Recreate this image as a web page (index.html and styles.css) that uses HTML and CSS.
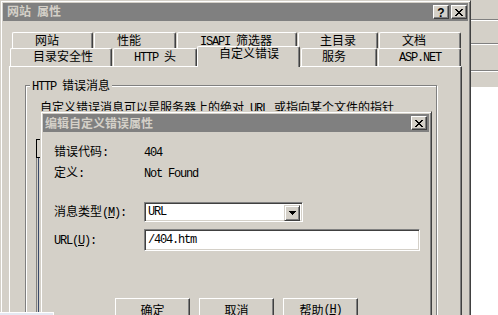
FILE: index.html
```html
<!DOCTYPE html>
<html>
<head>
<meta charset="utf-8">
<link rel="stylesheet" href="styles.css">
</head>
<body>
<div class="desk">
  <div class="bgwin">
    <div class="bg-sp s1"></div>
    <div class="bg-rule"></div>
    <div class="bg-sp s2"></div>
    <div class="bg-rule"></div>
    <div class="bg-sp s3"></div>
    <div class="bg-rule"></div>
    <div class="bg-sp s4"></div>
    <div class="bg-white"></div>
  </div>

  <div class="win">
    <div class="cap">
      <span class="cap-title">网站<span class="l"> </span>属性</span>
      <div class="cap-btns">
        <span class="cbtn help">?</span>
        <span class="cbtn"><svg width="8" height="7" viewBox="0 0 8 7"><path d="M0 0h2v1h-2zM6 0h2v1h-2zM1 1h2v1h-2zM5 1h2v1h-2zM2 2h4v1h-4zM3 3h2v1h-2zM2 4h4v1h-4zM1 5h2v1h-2zM5 5h2v1h-2zM0 6h2v1h-2zM6 6h2v1h-2z" fill="#000"/></svg></span>
      </div>
    </div>
    <div class="body">
      <div class="tabs">
        <div class="tabrow r1">
          <div class="tab t-wz">网站</div>
          <div class="tab t-xn">性能</div>
          <div class="tab t-isapi"><span class="l">ISAPI </span>筛选器</div>
          <div class="tab t-zml">主目录</div>
          <div class="tab t-wd">文档</div>
        </div>
        <div class="tabrow r2">
          <div class="tab t-ml">目录安全性</div>
          <div class="tab t-http"><span class="l">HTTP </span>头</div>
          <div class="tab t-sel">自定义错误</div>
          <div class="tab t-fw">服务</div>
          <div class="tab t-asp"><span class="l">ASP.NET</span></div>
        </div>
      </div>
      <div class="pane">
        <div class="group">
          <div class="legend"><span class="l">HTTP </span>错误消息</div>
          <div class="desc">自定义错误消息可以是服务器上的绝对<span class="l"> URL </span>或指向某个文件的指针</div>
          <div class="list">
            <div class="list-sel"></div>
            <div class="list-rest"></div>
          </div>
        </div>
      </div>
    </div>
  </div>

  <div class="dlg">
    <div class="cap dcap">
      <span class="cap-title">编辑自定义错误属性</span>
      <div class="cap-btns dbtns">
        <span class="cbtn"><svg width="8" height="7" viewBox="0 0 8 7"><path d="M0 0h2v1h-2zM6 0h2v1h-2zM1 1h2v1h-2zM5 1h2v1h-2zM2 2h4v1h-4zM3 3h2v1h-2zM2 4h4v1h-4zM1 5h2v1h-2zM5 5h2v1h-2zM0 6h2v1h-2zM6 6h2v1h-2z" fill="#000"/></svg></span>
      </div>
    </div>
    <div class="dbody">
      <div class="drow row1">
        <div class="dlab">错误代码<span class="l">:</span></div>
        <div class="dval"><span class="l">404</span></div>
      </div>
      <div class="drow row2">
        <div class="dlab">定义<span class="l">:</span></div>
        <div class="dval"><span class="l">Not Found</span></div>
      </div>
      <div class="drow row3">
        <div class="dlab">消息类型<span class="l">(<u>M</u>):</span></div>
        <div class="combo">
          <div class="combo-text"><span class="l">URL</span></div>
          <div class="dd"><svg width="7" height="4" viewBox="0 0 7 4"><path d="M0 0h7v1h-1v1h-1v1h-1v1h-1v-1h-1v-1h-1v-1h-1z" fill="#000"/></svg></div>
        </div>
      </div>
      <div class="drow row4">
        <div class="dlab"><span class="l">URL(<u>U</u>):</span></div>
        <div class="edit"><span class="l">/404.htm</span></div>
      </div>
      <div class="btns">
        <div class="btn">确定</div>
        <div class="btn">取消</div>
        <div class="btn">帮助<span class="l">(<u>H</u>)</span></div>
      </div>
    </div>
  </div>

  <div class="taskitem"></div>
</div>
</body>
</html>
```

FILE: styles.css
```css
* { box-sizing: border-box; }
html, body { margin: 0; padding: 0; }
body {
  width: 498px;
  height: 315px;
  overflow: hidden;
  background: #d4d0c8;
  color: #000;
  font-family: "Noto Sans CJK SC", sans-serif;
  font-size: 12px;
  line-height: 12px;
}
.desk { position: relative; width: 498px; height: 315px; overflow: hidden; }
.l { font-family: "Liberation Mono", "Noto Sans CJK SC", monospace; letter-spacing: -1.2px; }

/* background window on the right */
.bgwin {
  position: absolute; left: 471px; top: 0; width: 27px; height: 315px;
  display: flex; flex-direction: column; background: #d4d0c8;
}
.bg-sp.s1 { height: 19px; }
.bg-sp.s2 { height: 22px; }
.bg-sp.s3 { height: 25px; }
.bg-sp.s4 { height: 15px; }
.bg-rule { height: 2px; border-top: 1px solid #808080; border-bottom: 1px solid #fff; }
.bg-white { flex: 1; background: #fff; }

/* outer property window */
.win {
  position: absolute; left: 0; top: 0; width: 471px; height: 345px;
  border: 1px solid; border-color: #d4d0c8 #404040 #404040 #d4d0c8;
  box-shadow: inset 1px 1px #fff, inset -1px -1px #808080;
  padding: 2px; background: #d4d0c8;
}
.cap {
  height: 18px; background: #808080; color: #d4d0c8; font-weight: bold;
  display: flex; align-items: center; justify-content: space-between;
  padding-left: 4px;
}
.cap-title { white-space: nowrap; }
.cap-btns { display: flex; gap: 2px; margin-right: 1px; }
.cbtn {
  width: 16px; height: 14px; display: flex; align-items: center; justify-content: center;
  border: 1px solid; border-color: #fff #404040 #404040 #fff;
  box-shadow: inset -1px -1px #808080; background: #d4d0c8;
}
.cbtn.help { font: bold 12px/12px "Liberation Sans", sans-serif; color: #000; padding-top: 1px; }
.body { padding-top: 11px; }

/* tabs */
.tabs { display: flex; flex-direction: column; }
.tabrow { display: flex; align-items: flex-start; }
.r1 { margin-left: 9px; height: 16px; }
.r2 { margin-left: 7px; height: 18px; }
.tab {
  height: 100%; margin-left: 1px; white-space: nowrap;
  border-top: 1px solid #fff; border-left: 1px solid #fff; border-right: 1px solid #404040;
  border-top-left-radius: 2px; border-top-right-radius: 2px;
  box-shadow: inset -1px 0 #808080; background: #d4d0c8;
}
.r1 .tab { padding: 1px 0 0 22px; }
.r2 .tab { padding: 1px 0 0 20px; height: 18px; }
.t-wz { width: 81px; margin-left: 0; }
.t-xn { width: 82px; }
.t-isapi { width: 120px; }
.r1 .t-zml { width: 80px; padding-left: 21px; }
.t-wd { width: 82px; }
.r2 .t-ml { width: 102px; margin-left: 0; padding-left: 22px; }
.t-http { width: 84px; }
.r2 .t-sel {
  width: 103px; margin-left: 0; height: 21px; margin-top: -2px;
  padding: 0 0 0 21px; position: relative; z-index: 1;
}
.t-fw { width: 76px; }
.t-asp { width: 83px; }

.pane {
  margin-left: 6px; width: 453px; height: 260px;
  border: 1px solid; border-color: #fff #404040 #404040 #fff;
  box-shadow: inset -1px -1px #808080;
  padding: 18px 0 0 15px;
}
.group {
  width: 412px; height: 240px;
  border: 1px solid #808080;
  box-shadow: inset 1px 1px #fff, 1px 1px #fff;
  display: flex; flex-direction: column; align-items: flex-start;
}
.legend { margin: -7px 0 0 4px; padding: 0 2px; height: 12px; background: #d4d0c8; white-space: nowrap; }
.desc { margin: 10px 0 0 14px; height: 12px; white-space: nowrap; }
.list {
  margin: 26px 0 0 10px; width: 300px; height: 180px;
  border-left: 1px solid #808080;
  display: flex; flex-direction: column;
}
.list-sel { height: 19px; border: 1px solid #000; border-right: 0; margin-left: -1px; }
.list-rest { flex: 1; margin-left: 1px; border-left: 1px solid #3a4a6a; }

/* dialog */
.dlg {
  position: absolute; left: 40px; top: 111px; width: 392px; height: 230px;
  border: 1px solid; border-color: #d4d0c8 #404040 #404040 #d4d0c8;
  box-shadow: inset 1px 1px #fff, inset -1px -1px #808080;
  padding: 2px; background: #d4d0c8;
}
.dcap { padding-left: 2px; }
.dbtns { margin-right: 2px; }
.dbody { padding: 14px 0 0 11px; display: flex; flex-direction: column; }
.drow { display: flex; align-items: center; white-space: nowrap; }
.row1 { height: 12px; }
.row2 { height: 12px; margin-top: 9px; }
.row3 { height: 20px; margin-top: 23px; }
.row4 { height: 22px; margin-top: 7px; }
.dlab { width: 90px; }
.combo {
  width: 159px; height: 20px; display: flex; padding: 2px;
  border: 1px solid; border-color: #808080 #fff #fff #808080;
  box-shadow: inset 1px 1px #404040, inset -1px -1px #d4d0c8;
  background: #fff;
}
.combo-text { flex: 1; padding-left: 1px; display: flex; align-items: center; }
.dd {
  width: 16px; height: 16px; display: flex; align-items: center; justify-content: center;
  border: 1px solid; border-color: #d4d0c8 #404040 #404040 #d4d0c8;
  box-shadow: inset 1px 1px #fff, inset -1px -1px #808080;
  background: #d4d0c8;
}
.edit {
  width: 276px; height: 22px; display: flex; align-items: center;
  padding-left: 3px;
  border: 1px solid; border-color: #808080 #fff #fff #808080;
  box-shadow: inset 1px 1px #404040, inset -1px -1px #d4d0c8;
  background: #fff;
}
.btns { display: flex; gap: 9px; margin: 47px 0 0 61px; }
.btn {
  width: 75px; height: 23px; display: flex; align-items: center; justify-content: center;
  border: 1px solid; border-color: #fff #404040 #404040 #fff;
  box-shadow: inset -1px -1px #808080; background: #d4d0c8; white-space: nowrap;
}

.taskitem {
  position: absolute; left: 0; top: 312px; width: 54px; height: 10px;
  background: #e4e9f2; border-top: 1px solid #fff; border-right: 1px solid #fff;
}
```
